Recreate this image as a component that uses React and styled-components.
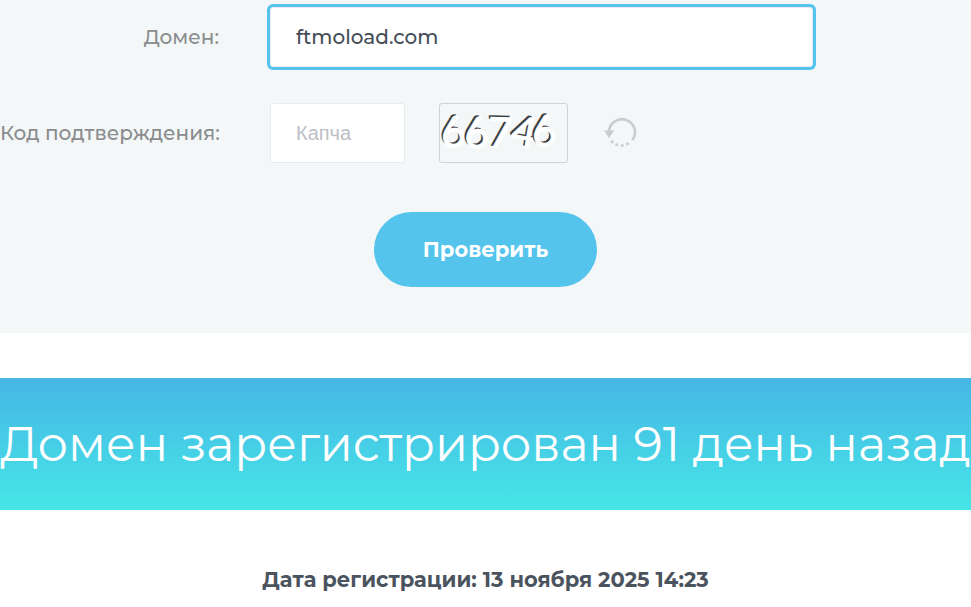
import { useState } from "react";

import styled, { createGlobalStyle } from "styled-components";

const GlobalStyle = createGlobalStyle`
    * {
        box-sizing: border-box;
    }

    body {
        margin: 0;
        background-color: #ffffff;
        color: #4b545e;
        font-family: Montserrat, Inter, "Open Sans", sans-serif;
        font-size: 20px;
        line-height: 28px;
    }
`;

const Form = styled.form`
    display: flex;
    flex-direction: column;
    gap: 36px;
    padding: 7px 0 46px;
    background-color: #f3f7f8;
`;

const Row = styled.div`
    display: grid;
    grid-template-columns: 219px minmax(0, 543px);
    column-gap: 51px;
    align-items: center;
`;

const Label = styled.label`
    color: #8a8c8e;
    font-weight: 500;
    text-align: right;
    white-space: nowrap;
`;

const Input = styled.input`
    width: ${({ $short }) => ($short ? "135px" : "100%")};
    height: 60px;
    padding: 0 25px;
    border: 1px solid #e9ebee;
    border-radius: 3px;
    outline: none;
    background-color: #ffffff;
    box-shadow: ${({ $active }) => ($active ? "0 0 0 3px #54c4ec" : "none")};
    color: #444d57;
    font-family: inherit;
    font-size: 20px;
    font-weight: 500;

    &:focus {
        box-shadow: 0 0 0 3px #54c4ec;
    }

    &::placeholder {
        color: #bcc0c6;
        font-family: "Liberation Sans", sans-serif;
        opacity: 1;
    }
`;

const CaptchaLine = styled.div`
    display: flex;
    align-items: center;
    gap: 34px;
`;

const CaptchaImage = styled.svg`
    display: block;
    flex: none;
    overflow: visible;
    border: 1px solid #cfd2d5;
    border-radius: 3px;
    font-family: Lato, sans-serif;
    font-size: 44px;
`;

const RefreshButton = styled.button`
    display: flex;
    padding: 0;
    border: none;
    background: none;
    cursor: pointer;
`;

const SubmitButton = styled.button`
    align-self: center;
    height: 75px;
    margin-top: 13px;
    padding: 0 49px;
    border: none;
    border-radius: 38px;
    background-color: #54c4ec;
    color: #ffffff;
    font-family: inherit;
    font-size: 21px;
    font-weight: 700;
    cursor: pointer;
`;

const Banner = styled.h1`
    margin: 45px 0 0;
    padding: 36px 0;
    background: linear-gradient(#46b6e6, #46e6e6);
    color: #ffffff;
    font-size: 48px;
    font-weight: 400;
    line-height: 60px;
    text-align: center;
    white-space: nowrap;
`;

const RegDate = styled.p`
    margin: 56px 0 0;
    font-size: 21px;
    font-weight: 700;
    text-align: center;
`;

const digits = [
    { value: "6", x: -1, y: 44, turn: -6 },
    { value: "6", x: 23, y: 45, turn: -6 },
    { value: "7", x: 46, y: 43, turn: 2 },
    { value: "4", x: 69, y: 40, turn: 10 },
    { value: "6", x: 93, y: 43, turn: -6 },
];

function Captcha() {
    return (
        <CaptchaImage width="129" height="60" viewBox="0 0 129 60" role="img" aria-label="66746">
            {digits.map(({ value, x, y, turn }) => (
                <g key={x} transform={`rotate(${turn} ${x} ${y})`}>
                    <text x={x} y={y} fill="#3c3f42">
                        {value}
                    </text>
                    <text x={x + 2} y={y + 2} fill="#ffffff" stroke="#ffffff" strokeWidth="1">
                        {value}
                    </text>
                </g>
            ))}
        </CaptchaImage>
    );
}

function RefreshIcon() {
    return (
        <svg width="36" height="32" viewBox="-2 -1 36 32" fill="none" stroke="#c8cbd0" strokeWidth="2.6">
            <path d="M5 14A13 13 0 1 1 28.4 22" />
            <path d="M25.5 24.6A13 13 0 0 1 7 22.5" strokeDasharray="2.8 2.7" strokeDashoffset="-1" />
            <path d="M0 12.5h10.5L5 20z" fill="#c8cbd0" stroke="none" />
        </svg>
    );
}

function App() {
    const [domain, setDomain] = useState("ftmoload.com");
    const [code, setCode] = useState("");

    return (
        <>
            <GlobalStyle />
            <Form onSubmit={(e) => e.preventDefault()}>
                <Row>
                    <Label htmlFor="domain">Домен:</Label>
                    <Input id="domain" $active value={domain} onChange={(e) => setDomain(e.target.value)} />
                </Row>
                <Row>
                    <Label htmlFor="code">Код подтверждения:</Label>
                    <CaptchaLine>
                        <Input
                            id="code"
                            $short
                            placeholder="Капча"
                            value={code}
                            onChange={(e) => setCode(e.target.value)}
                        />
                        <Captcha />
                        <RefreshButton type="button" aria-label="Обновить">
                            <RefreshIcon />
                        </RefreshButton>
                    </CaptchaLine>
                </Row>
                <SubmitButton type="submit">Проверить</SubmitButton>
            </Form>
            <Banner>Домен зарегистрирован 91 день назад</Banner>
            <RegDate>Дата регистрации: 13 ноября 2025 14:23</RegDate>
        </>
    );
}

export default App;
